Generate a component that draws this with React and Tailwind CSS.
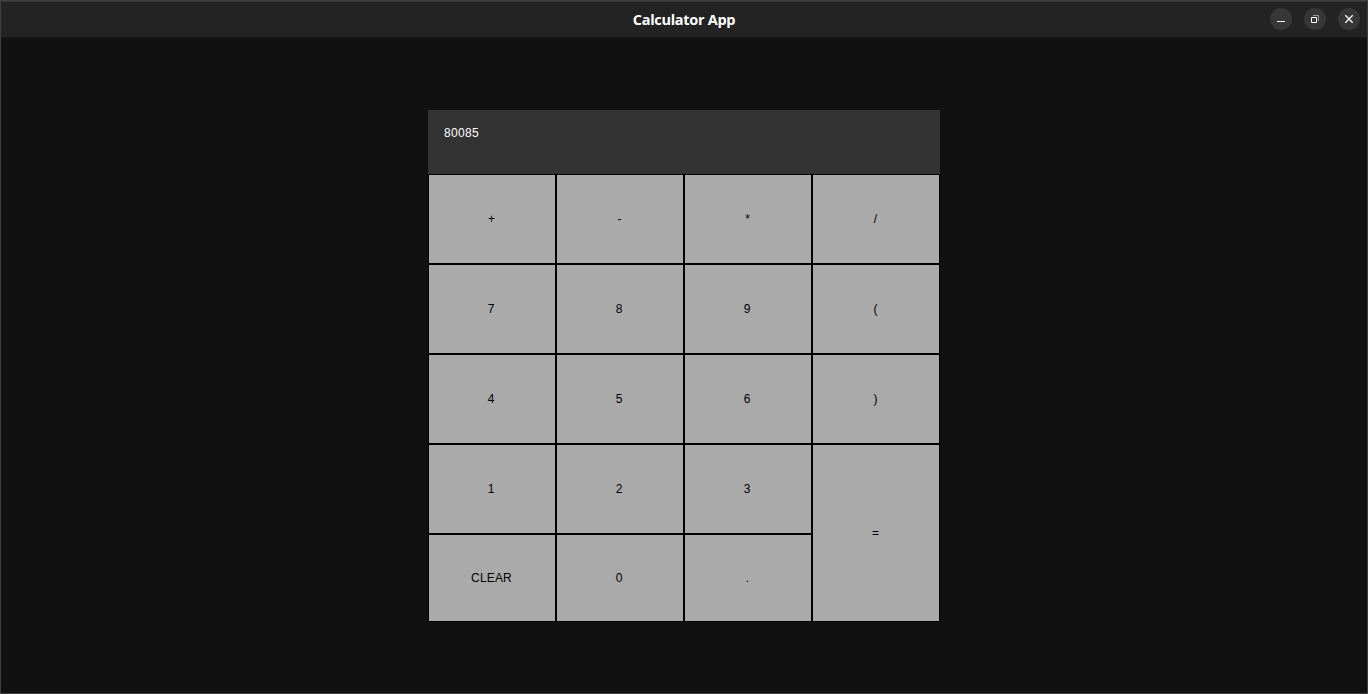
const keys = [
  "+", "-", "*", "/",
  "7", "8", "9", "(",
  "4", "5", "6", ")",
  "1", "2", "3", "=",
  "CLEAR", "0", ".",
];

function WindowButton({ label, children }) {
  return (
    <button aria-label={label} className="h-[22px] w-[22px] rounded-full bg-[#373737]">
      <svg width="22" height="22" viewBox="0 0 22 22" fill="none">
        {children}
      </svg>
    </button>
  );
}

function TitleBar() {
  return (
    <header className="grid h-[37px] shrink-0 grid-cols-[1fr_auto_1fr] items-center border-t border-b border-t-[#373737] border-b-[#1b1b1b] bg-[#232323] pb-px">
      <span />
      <h1 className="pt-0.5 font-['Open_Sans','Noto_Sans',sans-serif] text-[14.5px] leading-5 font-bold tracking-[-0.3px] text-white">Calculator App</h1>
      <div className="flex justify-end gap-3 pr-[7px]">
        <WindowButton label="Minimize">
          <path d="M7 13.5H15" stroke="#fff" />
        </WindowButton>
        <WindowButton label="Restore">
          <path d="M9 7.5H14.5V13" stroke="#9b9b9b" />
          <path d="M7.5 9.5H12.5V14.5H7.5Z" stroke="#fff" />
        </WindowButton>
        <WindowButton label="Close">
          <path d="M7.3 7.3L14.7 14.7M14.7 7.3L7.3 14.7" stroke="#fff" strokeWidth="1.3" />
        </WindowButton>
      </div>
    </header>
  );
}

function Key({ label }) {
  const isSymbol = label.length === 1 && !/\d/.test(label);
  return (
    <button
      className={`flex items-center justify-center border border-black bg-[#aaaaaa] pb-px text-black ${isSymbol ? "pr-px" : "pr-0.5"} ${label === "CLEAR" ? "pl-px tracking-[0.15px]" : ""} ${label === "=" ? "row-span-2" : ""}`}
    >
      {label}
    </button>
  );
}

export default function App() {
  return (
    <div className="flex h-screen flex-col border border-[#3f3f3f] bg-[#111111]">
      <TitleBar />
      <main className="flex flex-1 justify-center pt-[72px] font-['Liberation_Sans',Arial,sans-serif] text-[12px] leading-[14px]">
        <div className="flex h-[512px] w-[512px] flex-col">
          <output className="h-16 bg-[#333333] p-4 tracking-[0.33px] text-white">80085</output>
          <div className="grid flex-1 grid-cols-4 grid-rows-[90px_90px_90px_90px_88px]">
            {keys.map((key) => (
              <Key key={key} label={key} />
            ))}
          </div>
        </div>
      </main>
    </div>
  );
}
